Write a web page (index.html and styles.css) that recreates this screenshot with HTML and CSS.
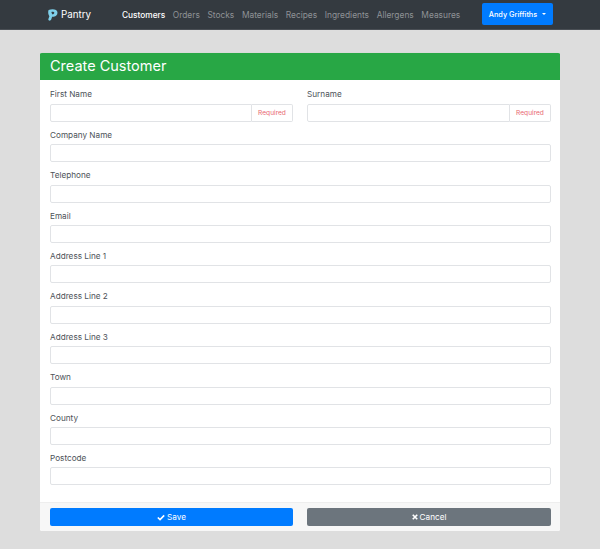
FILE: index.html
```html
<!DOCTYPE html>
<html lang="en">
<head>
<meta charset="utf-8">
<title>Create Customer</title>
<link rel="stylesheet" href="styles.css">
</head>
<body>
<nav class="navbar">
  <a class="brand">
    <svg class="logo" viewBox="0 0 14 16" width="11" height="14"><path d="M2 1.500C5 .5 9 .3 11.500 1.500 14 3 14 7 11.500 9 10 10.300 8 10.500 6.500 10.300L5.500 13.500C5 15 3.500 15.500 2.500 15 1.500 14.500 1.500 13.500 2 12.500L3 9.500C1.500 7 1 4 2 1.500Z" fill="#7fd0ea"/><path d="M5.500 4.200C7 3.500 9 3.800 9.300 5 9.500 6.200 8 7.200 6.500 7L6 5.500Z" fill="#343a40"/></svg>
    <span>Pantry</span>
  </a>
  <div class="nav-links">
    <a class="nav-link active">Customers</a>
    <a class="nav-link">Orders</a>
    <a class="nav-link">Stocks</a>
    <a class="nav-link">Materials</a>
    <a class="nav-link">Recipes</a>
    <a class="nav-link">Ingredients</a>
    <a class="nav-link">Allergens</a>
    <a class="nav-link">Measures</a>
  </div>
  <button class="user-btn">Andy Griffiths<i class="caret"></i></button>
</nav>
<main class="page">
  <section class="card">
    <h1 class="card-header">Create Customer</h1>
    <div class="card-body">
      <div class="split">
        <div class="field">
          <label>First Name</label>
          <div class="input-group"><input type="text"><span class="addon">Required</span></div>
        </div>
        <div class="field">
          <label>Surname</label>
          <div class="input-group"><input type="text"><span class="addon">Required</span></div>
        </div>
      </div>
      <div class="field"><label>Company Name</label><input class="control" type="text"></div>
      <div class="field"><label>Telephone</label><input class="control" type="text"></div>
      <div class="field"><label>Email</label><input class="control" type="text"></div>
      <div class="field"><label>Address Line 1</label><input class="control" type="text"></div>
      <div class="field"><label>Address Line 2</label><input class="control" type="text"></div>
      <div class="field"><label>Address Line 3</label><input class="control" type="text"></div>
      <div class="field"><label>Town</label><input class="control" type="text"></div>
      <div class="field"><label>County</label><input class="control" type="text"></div>
      <div class="field"><label>Postcode</label><input class="control" type="text"></div>
    </div>
    <div class="card-footer">
      <button class="btn btn-save"><svg viewBox="0 0 10 8" width="8" height="7"><path d="M1 4l2.800 2.700L9 1.300" fill="none" stroke="#fff" stroke-width="2"/></svg>Save</button>
      <button class="btn btn-cancel"><svg viewBox="0 0 8 8" width="6" height="6"><path d="M1 1l6 6M7 1L1 7" fill="none" stroke="#fff" stroke-width="2.200"/></svg>Cancel</button>
    </div>
  </section>
</main>
</body>
</html>
```
FILE: styles.css
```css
* { box-sizing: border-box; }
html, body { margin: 0; height: 100%; }
body {
  background: #dddddd;
  font-family: Inter, "Open Sans", sans-serif;
  color: #495057;
}
.navbar {
  display: flex;
  align-items: center;
  height: 30px;
  padding: 0 47px;
  background: #343a40;
  border-bottom: 1px solid #4a4f55;
}
.brand {
  display: flex;
  align-items: center;
  gap: 3px;
  width: 75px;
  color: #fff;
  font-size: 9.800px;
  font-weight: 400;
}
.logo { flex: none; }
.nav-links { display: flex; gap: 7.600px; flex: 1; }
.nav-link {
  color: #8f9296;
  font-size: 8.400px;
  font-weight: 400;
  white-space: nowrap;
}
.nav-link.active { color: #fff; font-weight: 500; font-size: 8.300px; }
.user-btn {
  display: flex;
  align-items: center;
  justify-content: center;
  width: 71px;
  height: 22px;
  margin-top: -1px;
  padding: 0;
  border: 0;
  border-radius: 2px;
  background: #007bff;
  color: #fff;
  font: 500 7.300px Inter, sans-serif;
}
.caret {
  margin-left: 5px;
  border-top: 2px solid #fff;
  border-left: 2px solid transparent;
  border-right: 2px solid transparent;
}
.page { padding: 22px 40px 0; }
.card {
  display: flex;
  flex-direction: column;
  height: 479px;
  background: #fff;
  border-top: 1px solid #d9dcd9;
  border-radius: 2px;
  overflow: hidden;
}
.card-header {
  height: 27px;
  margin: 0;
  padding: 0 10px;
  background: #28a745;
  color: #fff;
  font-size: 14.500px;
  font-weight: 400;
  line-height: 26px;
}
.card-body { flex: 1; padding: 6.400px 9px 0 10px; }
.split { display: grid; grid-template-columns: 243px 244px; column-gap: 14px; }
.field { display: flex; flex-direction: column; height: 40.400px; }
label {
  height: 17.400px;
  color: #4d5258;
  font-size: 8.200px;
  font-weight: 400;
  line-height: 17px;
  white-space: nowrap;
}
input {
  height: 18px;
  border: 1px solid #e1e3e6;
  border-radius: 2px;
  background: #fff;
  outline: 0;
}
.control { width: 100%; }
.input-group { display: flex; height: 18px; }
.input-group input { flex: 1; min-width: 0; border-radius: 2px 0 0 2px; }
.addon {
  width: 41px;
  height: 18px;
  border: 1px solid #e1e3e6;
  border-left-width: 0;
  border-radius: 0 2px 2px 0;
  color: #e8656f;
  font-size: 6.600px;
  line-height: 16px;
  text-align: center;
}
.card-footer {
  display: grid;
  grid-template-columns: 243px 244px;
  column-gap: 14px;
  height: 29px;
  padding: 5px 9px 0 10px;
  background: #f7f7f7;
  border-top: 1px solid #eeeeee;
}
.btn {
  display: flex;
  align-items: center;
  justify-content: center;
  gap: 2px;
  height: 18px;
  padding: 0;
  border: 0;
  border-radius: 2px;
  color: #fff;
  font: 400 8.200px Inter, sans-serif;
}
.btn-save { background: #007bff; }
.btn-cancel { background: #6c757d; }
```
